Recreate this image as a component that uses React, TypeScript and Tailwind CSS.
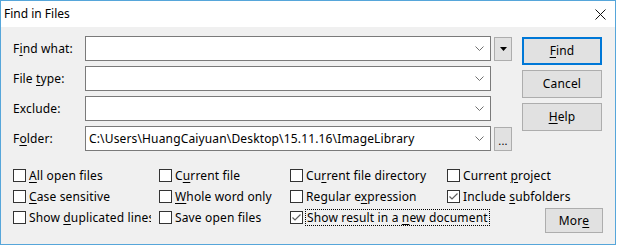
import React from 'react';

const Chevron: React.FC = () => (
  <svg width="9" height="5" viewBox="0 0 9 5" className="shrink-0">
    <polyline points="0.5,0.5 4.5,4.5 8.5,0.5" fill="none" stroke="#707070" strokeWidth="1" />
  </svg>
);

const Combo: React.FC<{ value?: string }> = ({ value }) => (
  <div className="flex h-[25px] w-[406px] items-center border border-[#7a7a7a] bg-white pl-[3px] pr-[6px]">
    <span className="flex-1 truncate whitespace-nowrap">{value}</span>
    <Chevron />
  </div>
);

const SmallBtn: React.FC<{ children: React.ReactNode }> = ({ children }) => (
  <div className="flex h-[24px] w-[18px] items-center justify-center border border-[#adadad] bg-[#e1e1e1]">
    {children}
  </div>
);

const Btn: React.FC<{ children: React.ReactNode; primary?: boolean }> = ({ children, primary }) => (
  <div
    className={
      'flex h-[28px] w-[80px] items-center justify-center bg-[#e1e1e1] ' +
      (primary ? 'border-2 border-[#0078d7]' : 'border border-[#adadad]')
    }
  >
    {children}
  </div>
);

const U: React.FC<{ children: React.ReactNode }> = ({ children }) => (
  <span className="underline decoration-1 underline-offset-[2px]">{children}</span>
);

const Check: React.FC<{ label: React.ReactNode; checked?: boolean; focused?: boolean; clip?: boolean }> = ({
  label,
  checked,
  focused,
  clip,
}) => (
  <div className={'flex h-[21px] items-center whitespace-nowrap ' + (clip ? 'w-[138px] overflow-hidden' : 'overflow-visible')}>
    <div className="flex h-[13px] w-[13px] shrink-0 items-center justify-center border border-[#333333] bg-white">
      {checked && (
        <svg width="11" height="11" viewBox="0 0 11 11">
          <polyline points="1.5,5.5 4,8 9.5,2.5" fill="none" stroke="#5f5f5f" strokeWidth="1.2" />
        </svg>
      )}
    </div>
    {focused ? (
      <span className="ml-[2px] border border-dotted border-black px-[1px] leading-[15px]">{label}</span>
    ) : (
      <span className="ml-[3px]">{label}</span>
    )}
  </div>
);

export default function App() {
  return (
    <div className="h-[248px] w-[619px] bg-white font-['Segoe_UI','Noto_Sans',sans-serif] text-[12px] tracking-[0.15px] text-black">
      <div className="flex h-[245px] w-[616px] flex-col border border-[#56a6da] bg-[#f0f0f0]">
        {/* title bar */}
        <div className="flex h-[26px] shrink-0 items-center justify-between bg-white pl-[3px] pr-[9px]">
          <span className="tracking-normal">Find in Files</span>
          <svg width="11" height="11" viewBox="0 0 11 11">
            <path d="M0.5 0.5 L10.5 10.5 M10.5 0.5 L0.5 10.5" stroke="#111" strokeWidth="1" />
          </svg>
        </div>

        {/* fields */}
        <div className="flex pl-[12px] pt-[9px]">
          <div className="flex flex-col gap-[5px]">
            <div className="flex items-center">
              <span className="w-[72px]">F<U>i</U>nd what:</span>
              <Combo />
              <div className="ml-[3px]">
                <SmallBtn>
                  <svg width="7" height="4" viewBox="0 0 7 4">
                    <polygon points="0,0 7,0 3.5,4" fill="#000" />
                  </svg>
                </SmallBtn>
              </div>
            </div>
            <div className="flex items-center">
              <span className="w-[72px]">File <U>t</U>ype:</span>
              <Combo />
            </div>
            <div className="flex items-center">
              <span className="w-[72px]">Exclude:</span>
              <Combo />
            </div>
            <div className="flex items-center">
              <span className="w-[72px]">F<U>o</U>lder:</span>
              <Combo value={'C:\\Users\\HuangCaiyuan\\Desktop\\15.11.16\\ImageLibrary'} />
              <div className="ml-[3px]">
                <SmallBtn>
                  <span className="mt-[4px] text-[11px] leading-none">...</span>
                </SmallBtn>
              </div>
            </div>
          </div>
          <div className="ml-[10px] flex flex-col gap-[5px] pt-[1px]">
            <Btn primary>
              <U>F</U>ind
            </Btn>
            <Btn>Cancel</Btn>
            <Btn>
              <U>H</U>elp
            </Btn>
          </div>
        </div>

        {/* options */}
        <div className="mt-[14px] grid grid-cols-[140px_125px_151px_1fr] items-start gap-x-[6px] pl-[12px]">
          <Check clip label={<><U>A</U>ll open files</>} />
          <Check label={<>C<U>u</U>rrent file</>} />
          <Check label={<>Cu<U>r</U>rent file directory</>} />
          <Check label={<>Current <U>p</U>roject</>} />

          <Check clip label={<><U>C</U>ase sensitive</>} />
          <Check label={<><U>W</U>hole word only</>} />
          <Check label={<>Regular e<U>x</U>pression</>} />
          <Check checked label={<>Include <U>s</U>ubfolders</>} />

          <Check clip label={<>Show <U>d</U>uplicated lines</>} />
          <Check label="Save open files" />
          <Check checked focused label={<>Show result in a <U>n</U>ew document</>} />
          <div className="pl-[98px] pt-[1px]">
            <div className="flex h-[25px] w-[58px] items-center justify-center border border-[#adadad] bg-[#e1e1e1]">
              Mor<U>e</U>
            </div>
          </div>
        </div>
      </div>
    </div>
  );
}
